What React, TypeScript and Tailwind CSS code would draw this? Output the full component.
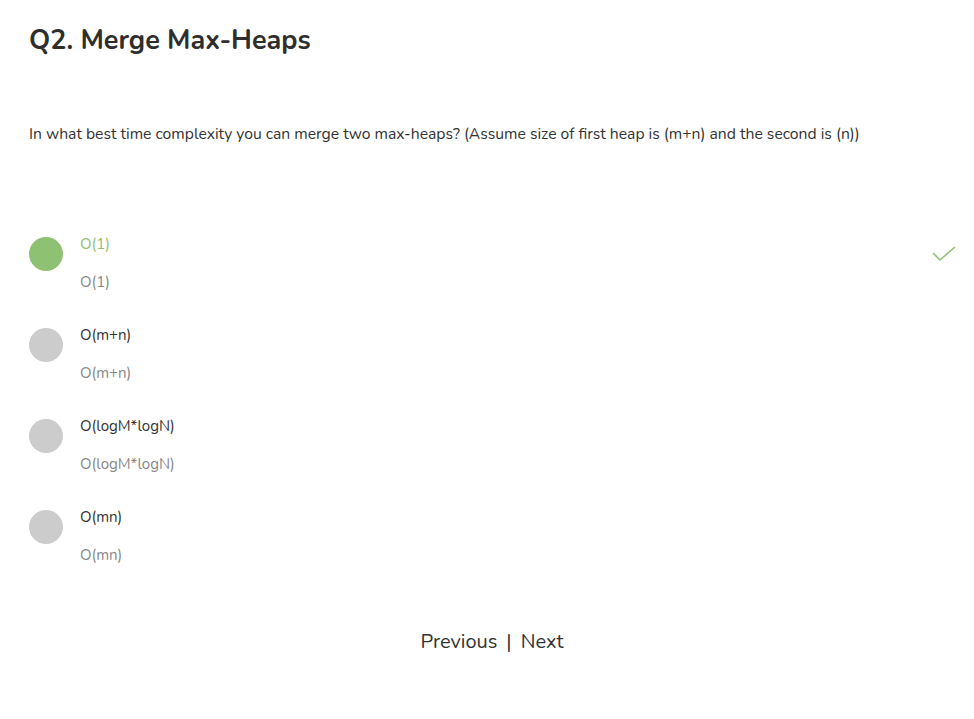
import React from "react";

const options = [
  { label: "O(1)", correct: true },
  { label: "O(m+n)", correct: false },
  { label: "O(logM*logN)", correct: false },
  { label: "O(mn)", correct: false },
];

const App: React.FC = () => {
  return (
    <div
      className="w-[974px] h-[719px] bg-white text-[#333] overflow-hidden"
      style={{ fontFamily: "Nunito, Lato, 'Open Sans', sans-serif" }}
    >
      <div className="px-[29px] pt-[24px]">
        <h1 className="text-[27px] font-bold leading-[34px] text-[#2e2e2e]">
          Q2. Merge Max-Heaps
        </h1>
        <p className="mt-[65px] text-[15.7px] leading-[22px] text-[#333]">
          In what best time complexity you can merge two max-heaps? (Assume size of first heap is (m+n) and the second is (n))
        </p>

        <div className="mt-[88px] flex flex-col gap-[31px]">
          {options.map((o) => (
            <div key={o.label} className="flex items-start">
              <div
                className={
                  "mt-[4px] w-[34px] h-[34px] rounded-full shrink-0 " +
                  (o.correct ? "bg-[#8fc172]" : "bg-[#cccccc]")
                }
              />
              <div className="ml-[17px] flex flex-col gap-[16px] flex-1">
                <span
                  className={
                    "text-[15px] leading-[22px] " +
                    (o.correct ? "text-[#8fc172]" : "text-[#333]")
                  }
                >
                  {o.label}
                </span>
                <span className="text-[15px] leading-[22px] text-[#888]">{o.label}</span>
              </div>
              {o.correct && (
                <svg width="26" height="20" viewBox="0 0 26 20" className="mt-[11px] mr-[-12px]">
                  <path d="M2 9 L9 16 L24 3" fill="none" stroke="#8fc172" strokeWidth="1.6" />
                </svg>
              )}
            </div>
          ))}
        </div>

        <div className="mt-[61px] flex justify-center items-center text-[20px] text-[#333] gap-[9px] pl-[10px]">
          <span>Previous</span>
          <span>|</span>
          <span>Next</span>
        </div>
      </div>
    </div>
  );
};

export default App;
